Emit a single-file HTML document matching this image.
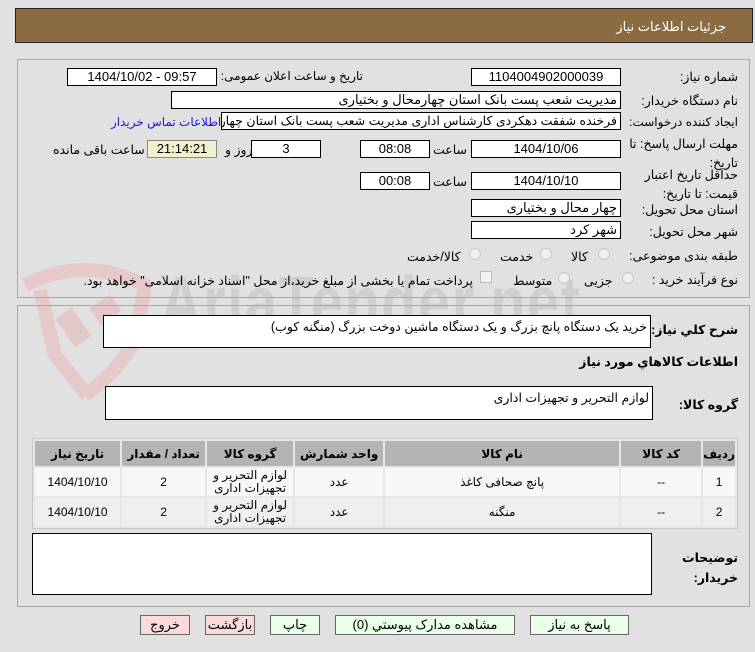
<!DOCTYPE html>
<html><head><meta charset="utf-8"><style>
*{box-sizing:border-box;margin:0;padding:0}
body{width:755px;height:652px;background:#e1e1e1;font-family:"Liberation Sans","DejaVu Sans",sans-serif;font-size:12px;color:#000;position:relative;overflow:hidden}
.a{position:absolute}
.hdr{position:absolute;left:15px;top:8px;width:738px;height:35px;background:#8b6b42;border:1px solid #222}
.hdr span{position:absolute;right:26px;top:10px;color:#fff;font-size:13px}
.panel{position:absolute;border:1px solid #a8a8a8}
.box{position:absolute;background:#fff;border:1px solid #000;height:18px;line-height:16px;font-size:13px;text-align:center;overflow:hidden;white-space:nowrap}
.r{direction:rtl;text-align:right;padding-right:3px}
.lbl{position:absolute;direction:rtl;text-align:right;font-size:12.5px;white-space:nowrap}
.ta{position:absolute;background:#fff;border:1px solid #000;direction:rtl;text-align:right;padding:3px 3px;font-size:12.5px}
.rad{position:absolute;width:12px;height:12px;border-radius:50%;border:1px solid #c8c8c8;background:#f0f0f0}
table{position:absolute;left:32px;top:438px;width:706px;border-collapse:separate;border-spacing:2px;border:1px solid #c8c8c8;direction:rtl;background:#e6e6e6}
th{background:#b4b4b4;height:25px;font-size:12px;font-weight:bold}
td{background:#f7f7f7;height:28px;text-align:center;font-size:12px;line-height:13px}
tr.e td{background:#efefef}
.btn{position:absolute;top:615px;height:20px;border:1px solid #666;font-size:13px;text-align:center;line-height:18px;direction:rtl}
.g{background:#eaffe8}.p{background:#fadada}
</style></head><body>
<svg class="a" style="left:15px;top:245px;opacity:.75" width="150" height="160" viewBox="0 0 150 160"><path d="M10 40 Q70 10 130 40 L120 95 Q100 130 70 150" fill="none" stroke="#e8c3c3" stroke-width="14"/><path d="M25 45 L40 110 L72 150" fill="none" stroke="#e8c3c3" stroke-width="14"/><rect x="48" y="65" width="20" height="35" fill="#e5c0c0" transform="rotate(-35 58 82)"/><rect x="78" y="55" width="25" height="20" fill="#e5c0c0" transform="rotate(-35 90 65)"/></svg>
<div class="a" style="left:160px;top:262px;font-size:72px;font-weight:bold;color:#c8c8c8;opacity:.7;letter-spacing:2px;transform:scaleX(.8);transform-origin:left">AriaTender.net</div>
<div class="hdr"><span>جزئیات اطلاعات نیاز</span></div>
<div class="panel" style="left:17px;top:59px;width:733px;height:239px"></div>
<div class="panel" style="left:17px;top:305px;width:733px;height:302px"></div>

<div class="lbl" style="right:17px;top:69px">شماره نیاز:</div>
<div class="box" style="left:471px;top:68px;width:150px">1104004902000039</div>
<div class="lbl" style="right:392px;top:69px;font-size:12px">تاریخ و ساعت اعلان عمومی:</div>
<div class="box" style="left:67px;top:68px;width:150px">1404/10/02 - 09:57</div>

<div class="lbl" style="right:17px;top:93px">نام دستگاه خریدار:</div>
<div class="box r" style="left:171px;top:91px;width:450px">مدیریت شعب پست بانک استان چهارمحال و بختیاری</div>

<div class="lbl" style="right:17px;top:115px;font-size:12px">ایجاد کننده درخواست:</div>
<div class="box r" style="left:221px;top:112px;width:400px;font-size:12.5px">فرخنده شفقت دهکردی کارشناس اداری مدیریت شعب پست بانک استان چهارمحال</div>
<div class="lbl" style="left:111px;top:115px;color:#1a1ad0;font-size:12px">اطلاعات تماس خریدار</div>

<div class="lbl" style="right:17px;top:135px;line-height:19px">مهلت ارسال پاسخ: تا</div>
<div class="lbl" style="right:17px;top:154px;line-height:19px">تاریخ:</div>
<div class="box" style="left:471px;top:140px;width:150px">1404/10/06</div>
<div class="lbl" style="left:433px;top:142px">ساعت</div>
<div class="box" style="left:360px;top:140px;width:70px">08:08</div>
<div class="box" style="left:251px;top:140px;width:70px">3</div>
<div class="lbl" style="left:225px;top:142px">روز و</div>
<div class="box" style="left:147px;top:140px;width:70px;background:#f3f0cc;border-color:#888">21:14:21</div>
<div class="lbl" style="left:53px;top:142px">ساعت باقی مانده</div>

<div class="lbl" style="right:17px;top:166px;line-height:19px">حداقل تاریخ اعتبار</div>
<div class="lbl" style="right:17px;top:185px;line-height:19px">قیمت: تا تاریخ:</div>
<div class="box" style="left:471px;top:172px;width:150px">1404/10/10</div>
<div class="lbl" style="left:433px;top:174px">ساعت</div>
<div class="box" style="left:360px;top:172px;width:70px">00:08</div>

<div class="lbl" style="right:17px;top:202px">استان محل تحویل:</div>
<div class="box r" style="left:471px;top:199px;width:150px">چهار محال و بختیاری</div>
<div class="lbl" style="right:17px;top:224px">شهر محل تحویل:</div>
<div class="box r" style="left:471px;top:221px;width:150px">شهر کرد</div>

<div class="lbl" style="right:17px;top:248px">طبقه بندی موضوعی:</div>
<div class="rad" style="left:598px;top:248px"></div><div class="lbl" style="left:571px;top:249px">کالا</div>
<div class="rad" style="left:540px;top:248px"></div><div class="lbl" style="left:500px;top:249px">خدمت</div>
<div class="rad" style="left:469px;top:248px"></div><div class="lbl" style="left:407px;top:249px">کالا/خدمت</div>

<div class="lbl" style="right:17px;top:272px">نوع فرآیند خرید :</div>
<div class="rad" style="left:622px;top:272px"></div><div class="lbl" style="left:584px;top:273px">جزیی</div>
<div class="rad" style="left:558px;top:272px"></div><div class="lbl" style="left:513px;top:273px">متوسط</div>
<div class="a" style="left:480px;top:271px;width:12px;height:12px;border:1px solid #bbb;background:#f3f3f3"></div>
<div class="lbl" style="right:282px;top:273px;font-size:12.5px">پرداخت تمام یا بخشی از مبلغ خرید،از محل "اسناد خزانه اسلامی" خواهد بود.</div>

<div class="lbl" style="right:17px;top:322px;font-weight:bold">شرح کلي نیاز:</div>
<div class="ta" style="left:103px;top:315px;width:548px;height:33px">خرید یک دستگاه پانچ بزرگ و یک دستگاه ماشین دوخت بزرگ (منگنه کوب)</div>
<div class="lbl" style="right:17px;top:354px;font-weight:bold">اطلاعات کالاهاي مورد نیاز</div>
<div class="lbl" style="right:17px;top:397px;font-weight:bold">گروه کالا:</div>
<div class="ta" style="left:105px;top:386px;width:548px;height:34px">لوازم التحریر و تجهیزات اداری</div>

<table>
<tr><th style="width:28px">ردیف</th><th style="width:80px">کد کالا</th><th style="width:234px">نام کالا</th><th style="width:88px">واحد شمارش</th><th style="width:86px">گروه کالا</th><th style="width:83px">تعداد / مقدار</th><th>تاریخ نیاز</th></tr>
<tr><td>1</td><td>--</td><td>پانچ صحافی کاغذ</td><td>عدد</td><td>لوازم التحریر و<br>تجهیزات اداری</td><td>2</td><td>1404/10/10</td></tr>
<tr class="e"><td>2</td><td>--</td><td>منگنه</td><td>عدد</td><td>لوازم التحریر و<br>تجهیزات اداری</td><td>2</td><td>1404/10/10</td></tr>
</table>

<div class="lbl" style="right:17px;top:548px;font-weight:bold;line-height:20px">توضیحات<br>خریدار:</div>
<div class="ta" style="left:32px;top:533px;width:620px;height:62px"></div>

<div class="btn g" style="left:530px;width:99px">پاسخ به نیاز</div>
<div class="btn g" style="left:335px;width:180px">مشاهده مدارک پیوستي (0)</div>
<div class="btn g" style="left:270px;width:50px">چاپ</div>
<div class="btn p" style="left:205px;width:50px">بازگشت</div>
<div class="btn p" style="left:140px;width:50px">خروج</div>
</body></html>
